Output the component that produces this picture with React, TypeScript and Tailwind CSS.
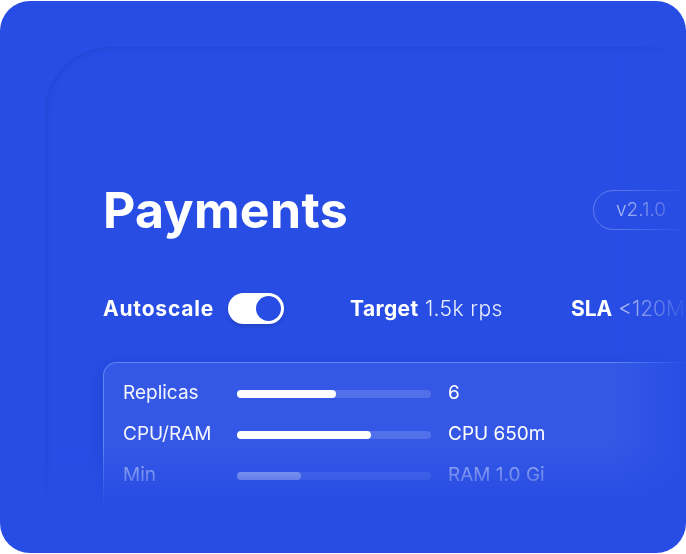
import React from "react";

function Bar({ pct, dim }: { pct: number; dim?: boolean }) {
  return (
    <div className="h-[8px] w-[194px] rounded-full bg-white/15">
      <div
        className={dim ? "h-full rounded-full bg-white/60" : "h-full rounded-full bg-white"}
        style={{ width: `${pct}%` }}
      />
    </div>
  );
}

export default function App() {
  const rows = [
    { label: "Replicas", pct: 51, value: "6" },
    { label: "CPU/RAM", pct: 69, value: "CPU 650m" },
    { label: "Min", pct: 33, value: "RAM 1.0 Gi", dim: true },
  ];
  return (
    <div className="w-[686px] h-[554px] bg-white pt-[1px] font-['Inter',sans-serif]">
      <div className="h-[552px] w-[686px] rounded-[30px] bg-[#284de4] overflow-hidden pt-[46px] pl-[45px]">
        <div className="w-[700px] h-[500px] rounded-tl-[66px] bg-[#284de4] shadow-[0_0_7px_rgba(15,30,130,0.5),inset_0_0_6px_rgba(15,30,130,0.25)] [mask-image:linear-gradient(to_bottom,black_398px,transparent_458px),linear-gradient(to_right,black_570px,transparent_645px)] [mask-composite:intersect] pl-[58px] pt-[138px]">
          <div className="grid grid-cols-[490px_auto] items-center">
            <h1 className="text-[50px] leading-none font-bold text-white tracking-[0.3px]">Payments</h1>
            <div className="h-[40px] w-[130px] rounded-full border border-white/25 flex items-center pl-[22px] text-[19px] font-light text-white/65">
              v2.1.0
            </div>
          </div>
          <div className="mt-[58px] grid grid-cols-[247px_221px_auto] items-center text-white">
            <div className="flex items-center gap-[14px]">
              <span className="text-[21px] font-bold tracking-[0.8px]">Autoscale</span>
              <div className="h-[31px] w-[56px] rounded-full bg-white flex items-center justify-end pr-[3px] shadow-[0_2px_4px_rgba(0,0,0,0.15)]">
                <div className="h-[25px] w-[25px] rounded-full bg-[#284de4]" />
              </div>
            </div>
            <div className="text-[21px] tracking-[0.4px]">
              <span className="font-bold">Target</span>{" "}
              <span className="font-light text-white/90">1.5k rps</span>
            </div>
            <div className="text-[21px] whitespace-nowrap">
              <span className="font-bold">SLA</span>{" "}
              <span className="font-light text-white/70">&lt;120MS</span>
            </div>
          </div>
          <div className="mt-[37px] w-[620px] h-[200px] rounded-[14px] bg-white/[0.06] border-t border-l border-[rgba(120,175,255,0.55)] shadow-[0_4px_14px_rgba(10,25,120,0.2)] pl-[19px] pt-[19px] flex flex-col gap-[17px]">
            {rows.map((r) => (
              <div key={r.label} className="flex items-center h-[24px]">
                <span className={r.dim ? "w-[114px] text-[19px] text-white/70" : "w-[114px] text-[19px] text-white/95"}>{r.label}</span>
                <Bar pct={r.pct} dim={r.dim} />
                <span className={r.dim ? "ml-[17px] text-[19px] text-white/70" : "ml-[17px] text-[19px] text-white"}>{r.value}</span>
              </div>
            ))}
          </div>
        </div>
      </div>
    </div>
  );
}
